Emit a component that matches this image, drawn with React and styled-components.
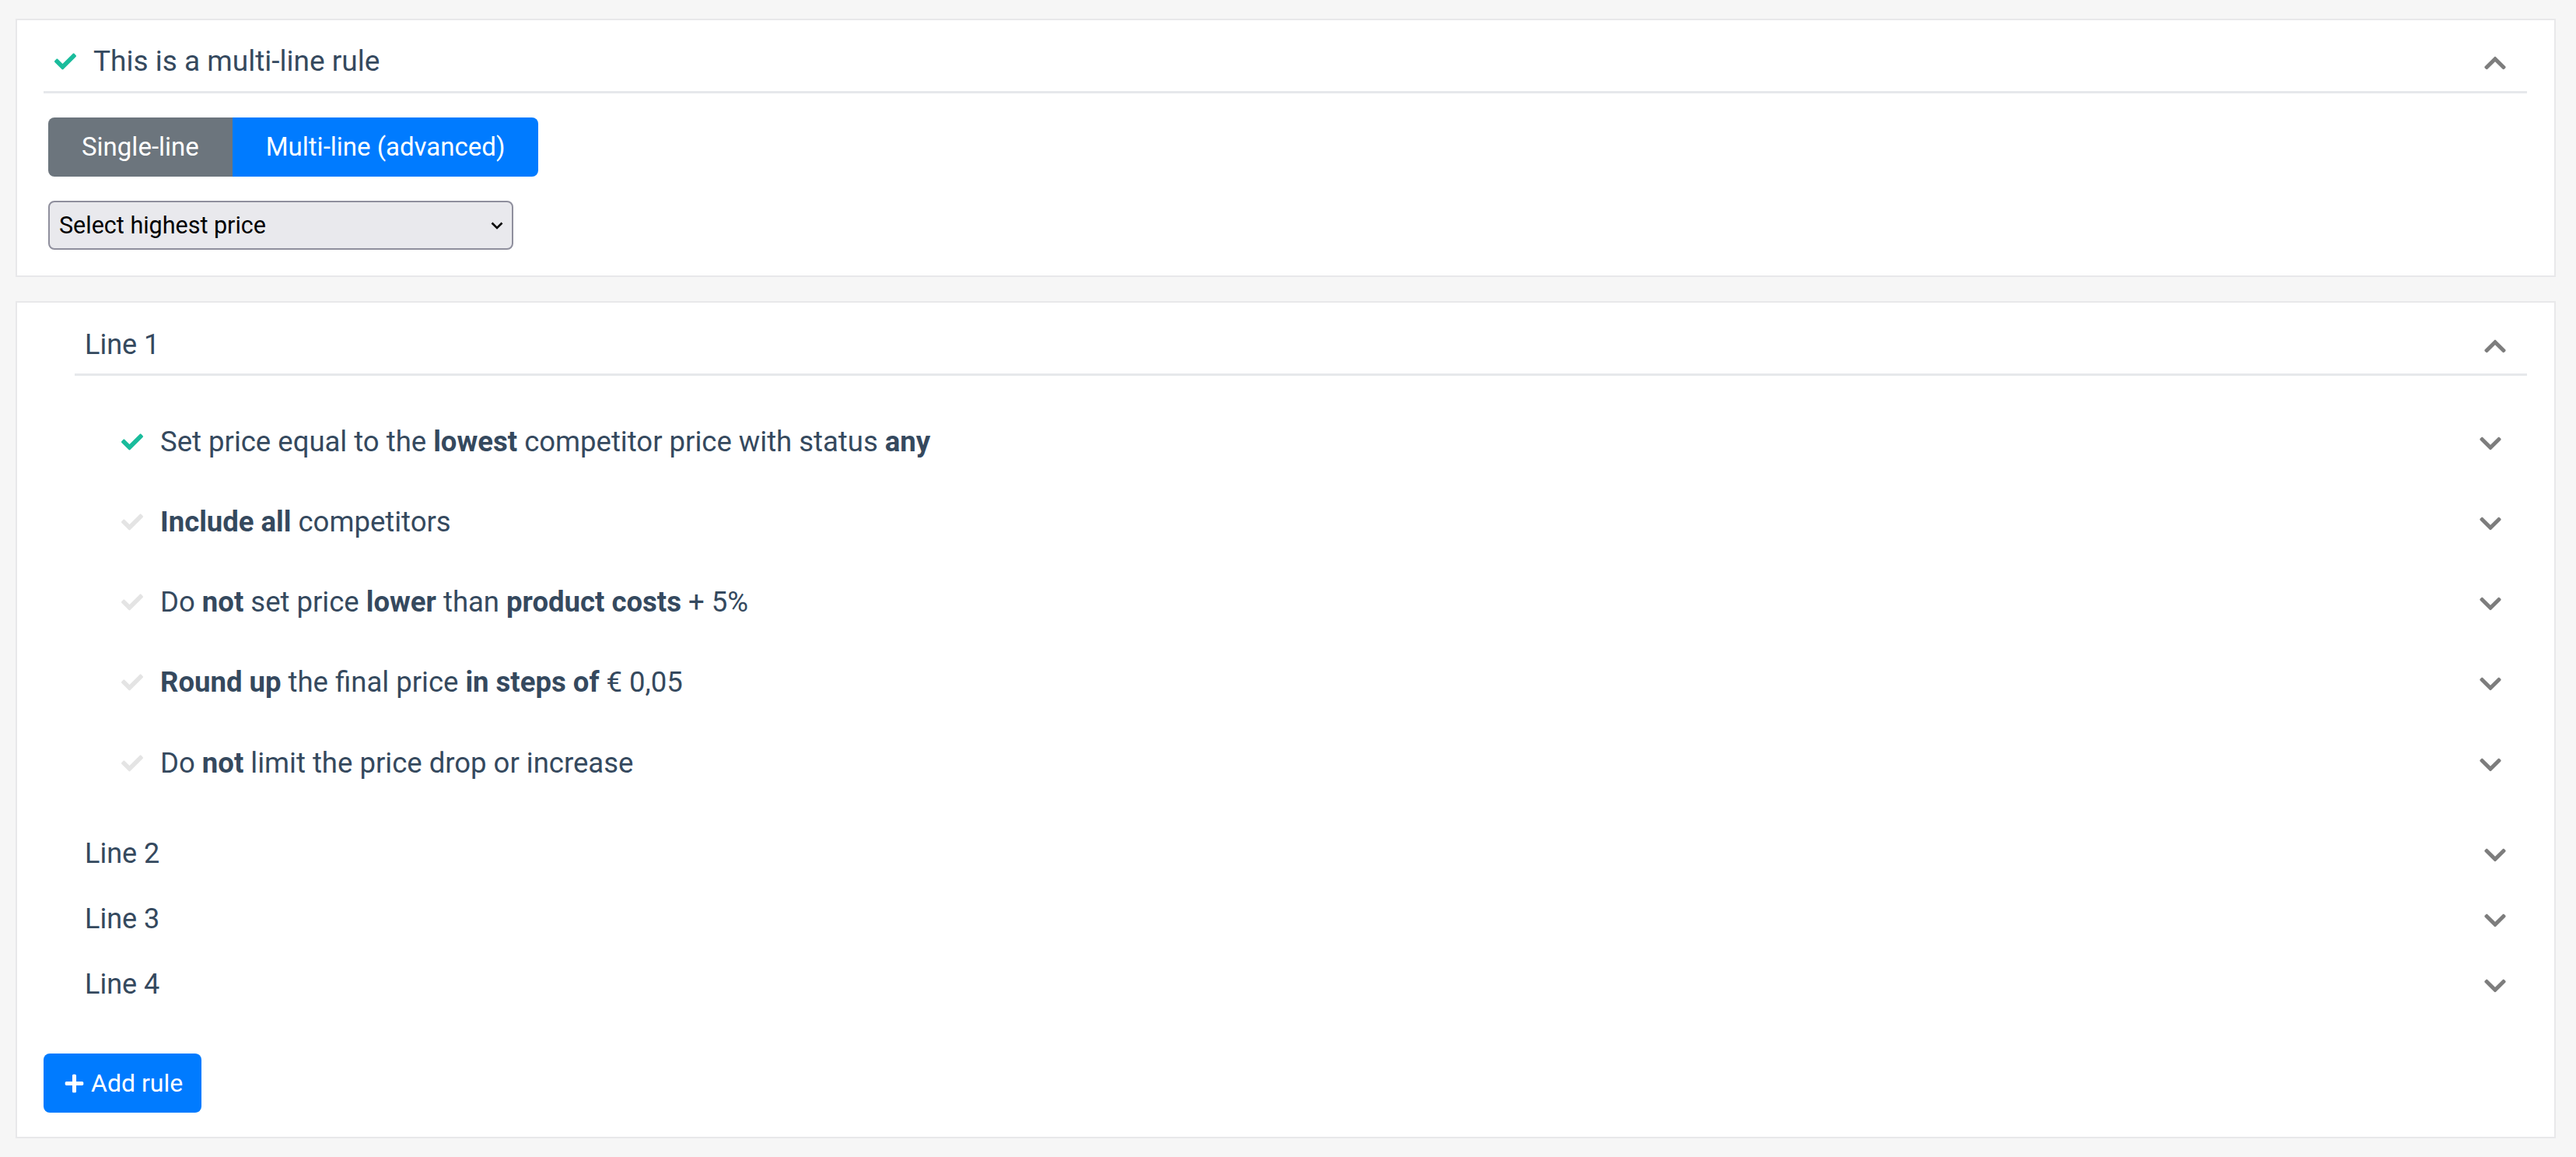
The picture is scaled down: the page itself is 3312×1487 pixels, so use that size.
import React from "react";
import styled, { createGlobalStyle } from "styled-components";
import { FaCheck, FaChevronDown, FaChevronUp, FaPlus } from "react-icons/fa";

const GlobalStyle = createGlobalStyle`
  html, body {
    margin: 0;
    background: #f6f6f6;
  }
  body {
    font-family: Roboto, "Liberation Sans", Arial, sans-serif;
    color: #35495e;
  }
  * {
    box-sizing: border-box;
  }
`;

const rules = [
  {
    done: true,
    parts: [
      "Set price equal to the ",
      ["lowest"],
      " competitor price with status ",
      ["any"],
    ],
  },
  { done: false, parts: [["Include all"], " competitors"] },
  {
    done: false,
    parts: [
      "Do ",
      ["not"],
      " set price ",
      ["lower"],
      " than ",
      ["product costs"],
      " + 5%",
    ],
  },
  {
    done: false,
    parts: [["Round up"], " the final price ", ["in steps of"], " € 0,05"],
  },
  { done: false, parts: ["Do ", ["not"], " limit the price drop or increase"] },
];

export default function App() {
  return (
    <>
      <GlobalStyle />
      <Page>
        <Card>
          <RuleHeader>
            <Check $done size={28} />
            <Title>This is a multi-line rule</Title>
            <Chevron as={FaChevronUp} size={32} />
          </RuleHeader>
          <ModeBody>
            <ModeGroup>
              <ModeButton>Single-line</ModeButton>
              <ModeButton $active>Multi-line (advanced)</ModeButton>
            </ModeGroup>
            <SelectWrap>
              <Select defaultValue="highest">
                <option value="highest">Select highest price</option>
                <option value="lowest">Select lowest price</option>
              </Select>
              <SelectArrow viewBox="0 0 16 10" aria-hidden="true">
                <path d="M1.5 1.5 8 8l6.5-6.5" />
              </SelectArrow>
            </SelectWrap>
          </ModeBody>
        </Card>

        <LinesCard>
          <LineBlock>
            <LineHeader $open>
              <LineTitle>Line 1</LineTitle>
              <Chevron as={FaChevronUp} size={32} />
            </LineHeader>
            <RuleList>
              {rules.map((rule, i) => (
                <RuleRow key={i}>
                  <Check $done={rule.done} size={28} />
                  <RuleText>
                    {rule.parts.map((part, j) =>
                      Array.isArray(part) ? (
                        <Strong key={j}>{part[0]}</Strong>
                      ) : (
                        <React.Fragment key={j}>{part}</React.Fragment>
                      )
                    )}
                  </RuleText>
                  <Chevron as={FaChevronDown} size={32} />
                </RuleRow>
              ))}
            </RuleList>
          </LineBlock>
          {["Line 2", "Line 3", "Line 4"].map((name) => (
            <LineBlock key={name}>
              <LineHeader>
                <LineTitle>{name}</LineTitle>
                <Chevron as={FaChevronDown} size={32} />
              </LineHeader>
            </LineBlock>
          ))}
          <AddButton>
            <FaPlus size={27} />
            Add rule
          </AddButton>
        </LinesCard>
      </Page>
    </>
  );
}

const Page = styled.div`
  display: flex;
  flex-direction: column;
  gap: 31px;
  padding: 24px 26px 23px 20px;
`;

const Card = styled.section`
  display: flex;
  flex-direction: column;
  background: #fff;
  border: 2px solid #e8e8ea;
  padding: 0 35px 0 34px;
`;

const LinesCard = styled(Card)`
  padding-top: 12px;
  padding-bottom: 31px;
`;

const RuleHeader = styled.div`
  display: flex;
  align-items: center;
  padding: 26px 25px 11px 14px;
  border-bottom: 3px solid #e6e8eb;
`;

const Check = styled(FaCheck)`
  flex: none;
  color: ${(p) => (p.$done ? "#1abc9c" : "#e4e4e4")};
`;

const Title = styled.h2`
  flex: 1;
  margin: 0 0 0 22px;
  font-size: 37px;
  font-weight: 400;
  line-height: 54px;
`;

const Chevron = styled.svg`
  flex: none;
  color: #7d7d7d;
  margin-top: 4px;
`;

const ModeBody = styled.div`
  display: flex;
  flex-direction: column;
  align-items: flex-start;
  gap: 31px;
  padding: 31px 0 33px 6px;
`;

const ModeGroup = styled.div`
  display: flex;
  border-radius: 8px;
  overflow: hidden;
`;

const ModeButton = styled.button`
  border: none;
  margin: 0;
  padding: 14px 43px;
  font-family: inherit;
  font-size: 33px;
  line-height: 48px;
  color: #fff;
  background: ${(p) => (p.$active ? "#007bff" : "#6c757d")};
  cursor: pointer;
`;

const SelectWrap = styled.div`
  position: relative;
  width: 598px;
`;

const Select = styled.select`
  appearance: none;
  width: 100%;
  height: 63px;
  margin: 0;
  padding: 0 48px 0 12px;
  font-family: inherit;
  font-size: 30.5px;
  color: #000;
  background: #e9e9ed;
  border: 2px solid #8f8f9d;
  border-radius: 8px;
`;

const SelectArrow = styled.svg`
  position: absolute;
  right: 13px;
  top: 27px;
  width: 16px;
  height: 10px;
  fill: none;
  stroke: #000;
  stroke-width: 2.6;
  pointer-events: none;
`;

const LineBlock = styled.div`
  display: flex;
  flex-direction: column;
  margin-left: 40px;
`;

const LineHeader = styled.div`
  display: flex;
  align-items: center;
  padding: 15px 25px ${(p) => (p.$open ? "10px" : "15px")} 13px;
  border-bottom: ${(p) => (p.$open ? "3px solid #e6e8eb" : "none")};
`;

const LineTitle = styled.span`
  flex: 1;
  font-size: 36px;
  line-height: 54px;
`;

const RuleList = styled.div`
  display: flex;
  flex-direction: column;
  padding: 33px 0 23px;
`;

const RuleRow = styled.div`
  display: flex;
  align-items: center;
  padding: 24.65px 31px 24.65px 60px;
`;

const RuleText = styled.span`
  flex: 1;
  margin-left: 22px;
  font-size: 36.5px;
  line-height: 54px;
`;

const Strong = styled.b`
  font-weight: 700;
`;

const AddButton = styled.button`
  align-self: flex-start;
  display: flex;
  align-items: center;
  gap: 8px;
  margin-top: 47px;
  padding: 14px 24px 14px 26px;
  border: none;
  border-radius: 8px;
  font-family: inherit;
  font-size: 32px;
  line-height: 48px;
  color: #fff;
  background: #007bff;
  cursor: pointer;
`;
